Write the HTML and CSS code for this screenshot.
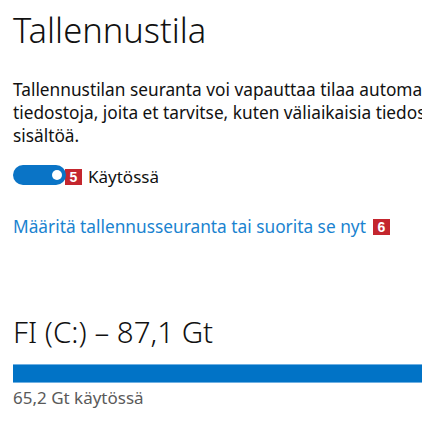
FILE: index.html
```html
<!DOCTYPE html>
<html lang="fi">
<head>
<meta charset="utf-8">
<link rel="stylesheet" href="styles.css">
</head>
<body>
<main class="page">
  <h1 class="title">Tallennustila</h1>
  <p class="desc">Tallennustilan seuranta voi vapauttaa tilaa automaattisesti poistamalla<br>tiedostoja, joita et tarvitse, kuten väliaikaisia tiedostoja ja roskakorin<br>sisältöä.</p>
  <div class="toggle-row">
    <span class="toggle"><span class="thumb"></span></span>
    <span class="badge badge-5">5</span>
    <span class="toggle-label">Käytössä</span>
  </div>
  <div class="link-row">
    <a class="link" href="#">Määritä tallennusseuranta tai suorita se nyt</a>
    <span class="badge">6</span>
  </div>
  <h2 class="drive">FI (C:) – 87,1 Gt</h2>
  <div class="bar"></div>
  <div class="used">65,2 Gt käytössä</div>
</main>
</body>
</html>
```

FILE: styles.css
```css
html, body {
  margin: 0;
  padding: 0;
  background: #ffffff;
  overflow: hidden;
}
body {
  font-family: "Noto Sans", "Open Sans", sans-serif;
  color: #000;
}
.page {
  padding: 8px 0 0 13px;
  width: 760px;
}
.title {
  margin: 0;
  font-weight: 300;
  font-size: 34.5px;
  line-height: 44px;
  color: #111;
}
.desc {
  margin: 26px 0 0 0;
  font-size: 17.3px;
  line-height: 23px;
  color: #111;
  white-space: nowrap;
}
.toggle-row {
  display: flex;
  align-items: center;
  margin-top: 17px;
  height: 22px;
}
.toggle {
  position: relative;
  display: block;
  width: 53px;
  height: 20px;
  border-radius: 10px;
  background: #0a74c6;
}
.thumb {
  position: absolute;
  right: 4px;
  top: 5px;
  width: 10px;
  height: 10px;
  border-radius: 50%;
  background: #fff;
}
.badge {
  display: inline-flex;
  align-items: center;
  justify-content: center;
  width: 17px;
  height: 16px;
  background: #c4262e;
  color: #fff;
  font-family: "Liberation Sans", Arial, sans-serif;
  font-weight: 700;
  font-size: 14px;
  line-height: 16px;
}
.badge-5 {
  margin-left: -1px;
  margin-top: 4px;
}
.toggle-label {
  margin-left: 6px;
  font-size: 17px;
  color: #111;
  margin-top: 2px;
}
.link-row {
  display: flex;
  align-items: center;
  margin-top: 29px;
  gap: 7px;
}
.link {
  font-size: 17.3px;
  color: #1a83d0;
  text-decoration: none;
}
.drive {
  margin: 76px 0 0 0;
  font-weight: 300;
  font-size: 29.5px;
  line-height: 36px;
  color: #111;
}
.bar {
  margin-top: 14px;
  height: 17px;
  background: #0173c6;
  border-top: 1px solid #6fb0e2;
  border-bottom: 1px solid #6fb0e2;
}
.used {
  margin-top: 4px;
  font-size: 17px;
  line-height: 22px;
  color: #5a5a5a;
}
```
